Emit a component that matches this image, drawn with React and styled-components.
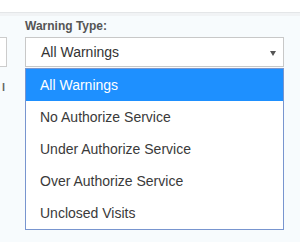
import React from "react";
import styled, { createGlobalStyle } from "styled-components";

const GlobalStyle = createGlobalStyle`
  html, body {
    margin: 0;
    padding: 0;
    background: #f7fbfd;
    font-family: Arial, "Liberation Sans", sans-serif;
  }
`;

const options = [
  "All Warnings",
  "No Authorize Service",
  "Under Authorize Service",
  "Over Authorize Service",
  "Unclosed Visits",
];

const App = () => {
  const selected = 0;

  return (
    <>
      <GlobalStyle />
      <StTopBar />
      <StStrip />
      <StContent>
        <StLeftCol>
          <StCutInput />
          <StCutLabel>l</StCutLabel>
        </StLeftCol>
        <StField>
          <StLabel>Warning Type:</StLabel>
          <StSelect>
            <span>{options[selected]}</span>
            <StArrow />
          </StSelect>
          <StList>
            {options.map((opt, i) => (
              <StOption key={opt} $active={i === selected}>
                {opt}
              </StOption>
            ))}
          </StList>
        </StField>
      </StContent>
    </>
  );
};

export default App;

const StTopBar = styled.div`
  height: 12px;
  background: #ffffff;
  border-bottom: 1px solid #e4e6e8;
`;

const StStrip = styled.div`
  height: 3px;
  background: #f1f3f5;
`;

const StContent = styled.div`
  display: flex;
  flex-direction: row;
  align-items: flex-start;
  height: 226px;
`;

const StLeftCol = styled.div`
  width: 7px;
  overflow: hidden;
  padding-top: 21px;
  display: flex;
  flex-direction: column;
  align-items: flex-end;
`;

const StCutInput = styled.div`
  width: 60px;
  height: 28px;
  flex-shrink: 0;
  background: #ffffff;
  border: 1px solid #cccccc;
`;

const StCutLabel = styled.div`
  margin-top: 14px;
  align-self: flex-start;
  padding-left: 2px;
  font-size: 11px;
  font-weight: bold;
  color: #666;
  line-height: 12px;
`;

const StField = styled.div`
  margin-left: 18px;
  width: 259px;
  padding-top: 3px;
`;

const StLabel = styled.div`
  font-size: 12px;
  font-weight: bold;
  color: #555555;
  line-height: 14px;
  height: 14px;
  margin-bottom: 4px;
`;

const StSelect = styled.div`
  box-sizing: border-box;
  height: 30px;
  display: flex;
  align-items: center;
  justify-content: space-between;
  padding: 0 7px 0 15px;
  background: #ffffff;
  border: 1px solid #c8c8c8;
  font-size: 14px;
  color: #333333;
`;

const StArrow = styled.span`
  width: 0;
  height: 0;
  margin-top: 2px;
  border-left: 3px solid transparent;
  border-right: 3px solid transparent;
  border-top: 5px solid #555555;
`;

const StList = styled.div`
  margin-top: 1px;
  background: #ffffff;
  border: 1px solid #7895cf;
`;

const StOption = styled.div`
  height: 32px;
  display: flex;
  align-items: center;
  padding-left: 14px;
  font-size: 14px;
  color: ${(p) => (p.$active ? "#ffffff" : "#3a3a3a")};
  background: ${(p) => (p.$active ? "#1e90ff" : "#ffffff")};
`;
